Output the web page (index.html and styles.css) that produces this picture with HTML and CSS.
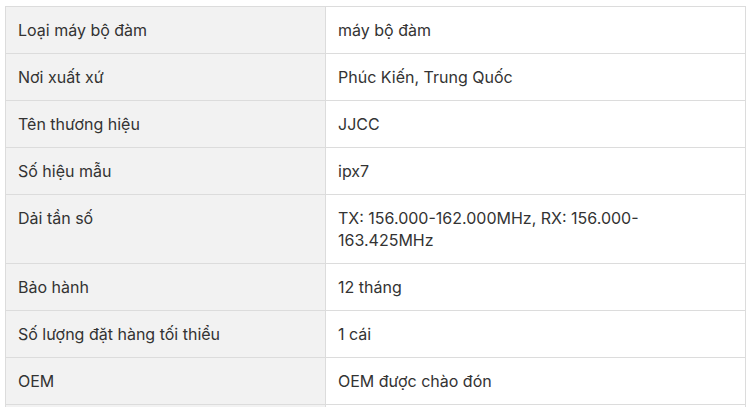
FILE: index.html
```html
<!DOCTYPE html>
<html lang="vi">
<head>
<meta charset="utf-8">
<link rel="stylesheet" href="styles.css">
</head>
<body>
<table class="spec">
  <tr><td class="k">Loại máy bộ đàm</td><td class="v">máy bộ đàm</td></tr>
  <tr><td class="k">Nơi xuất xứ</td><td class="v">Phúc Kiến, Trung Quốc</td></tr>
  <tr><td class="k">Tên thương hiệu</td><td class="v">JJCC</td></tr>
  <tr><td class="k">Số hiệu mẫu</td><td class="v">ipx7</td></tr>
  <tr><td class="k">Dải tần số</td><td class="v">TX: 156.000-162.000MHz, RX: 156.000-163.425MHz</td></tr>
  <tr><td class="k">Bảo hành</td><td class="v">12 tháng</td></tr>
  <tr><td class="k">Số lượng đặt hàng tối thiểu</td><td class="v">1 cái</td></tr>
  <tr><td class="k">OEM</td><td class="v">OEM được chào đón</td></tr>
  <tr><td class="k">&nbsp;</td><td class="v">&nbsp;</td></tr>
</table>
</body>
</html>
```
FILE: styles.css
```css
html, body {
  margin: 0;
  padding: 0;
  background: #fff;
}
body {
  padding: 6px 2px 0 5px;
  font-family: Inter, "Noto Sans", sans-serif;
  font-size: 16px;
  color: #333;
}
.spec {
  border-collapse: collapse;
  width: 741px;
  table-layout: fixed;
}
.spec td {
  border: 1px solid #dcdcdc;
  padding: 12px 12px;
  line-height: 22px;
  vertical-align: top;
}
.spec .k {
  width: 295px;
  background: #f2f2f2;
}
.spec .v {
  background: #fff;
}
```
